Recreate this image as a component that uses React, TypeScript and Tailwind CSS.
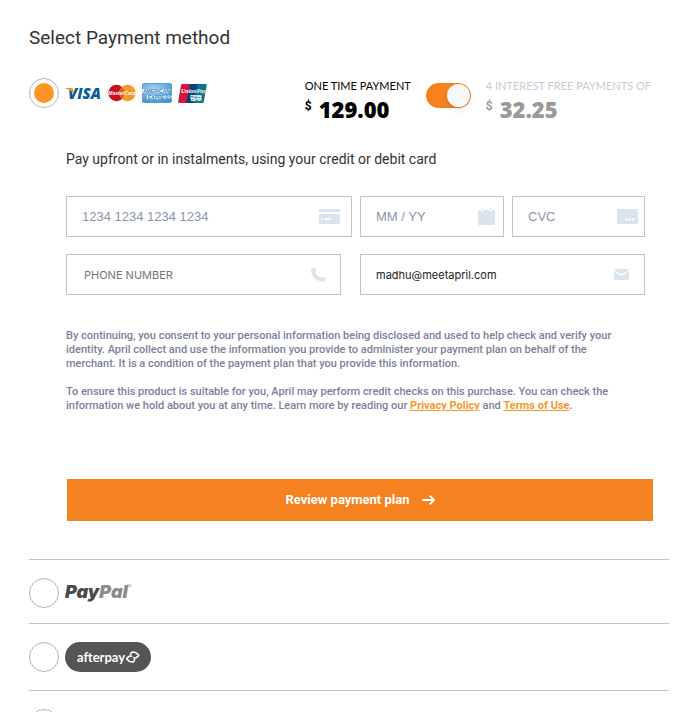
import { useState } from 'react';
import type { ReactNode } from 'react';

function VisaLogo() {
  return (
    <svg width="37" height="18" viewBox="0 0 37 18" className="overflow-visible" role="img" aria-label="Visa">
      <text x="3" y="15" fontSize="15" fontWeight="800" fontStyle="italic" fontFamily="'Open Sans', sans-serif" fill="#0a5b97">
        VISA
      </text>
      <path d="M0 4h6.200c1 0 1.600.4 1.900 1.400L9 10.500C7.200 7.300 4.200 5.300 0 4.300z" fill="#f4982b" />
    </svg>
  );
}

function MasterCardLogo() {
  return (
    <svg width="28" height="18" viewBox="0 0 28 18" className="overflow-visible" role="img" aria-label="MasterCard">
      <circle cx="8.500" cy="9" r="8.200" fill="#c9101c" />
      <circle cx="19.500" cy="9" r="8.200" fill="#f5992b" />
      <path d="M14 3a8.200 8.200 0 0 1 0 12a8.200 8.200 0 0 1 0-12z" fill="#e0611f" />
      <text x="14" y="11" fontSize="5" textAnchor="middle" fontWeight="700" fontStyle="italic" fontFamily="'Liberation Sans', sans-serif" fill="#fff">
        MasterCard
      </text>
    </svg>
  );
}

function AmexLogo() {
  return (
    <svg width="30" height="20" viewBox="0 0 30 20" role="img" aria-label="American Express">
      <defs>
        <radialGradient id="amex" cx="0.4" cy="0.3" r="0.8">
          <stop offset="0" stopColor="#a5d3f0" />
          <stop offset="1" stopColor="#3d8fcd" />
        </radialGradient>
      </defs>
      <rect x="0.500" y="0.500" width="29" height="19" rx="1.500" fill="url(#amex)" stroke="#5a9fd2" />
      <rect x="0" y="6" width="28" height="4" fill="#e9f4fb" />
      <rect x="5" y="12" width="25" height="4" fill="#e9f4fb" />
      <text x="1" y="10" fontSize="5" fontWeight="700" fontFamily="'Liberation Sans', sans-serif" fill="#2f7fc0">
        AMERICAN
      </text>
      <text x="6" y="16" fontSize="5" fontWeight="700" fontFamily="'Liberation Sans', sans-serif" fill="#2f7fc0">
        EXPRESS
      </text>
    </svg>
  );
}

function UnionPayLogo() {
  return (
    <svg width="29" height="19" viewBox="0 0 29 19" role="img" aria-label="UnionPay">
      <path d="M4.500 0H13L9 19H1.500C.4 19 0 18.300.2 17.300L3 1.300C3.200.4 3.700 0 4.500 0z" fill="#d8163a" />
      <path d="M12 0h8.500L17 19H8z" fill="#0d3f78" />
      <path d="M19.500 0h8c1 0 1.400.6 1.200 1.600L25.800 17.500c-.2 1-.8 1.500-1.800 1.500h-9z" fill="#0f6f8c" />
      <text x="3" y="9" fontSize="6" fontWeight="700" fontStyle="italic" fontFamily="'Liberation Serif', serif" fill="#fff">
        UnionPay
      </text>
      <text x="12" y="16" fontSize="6" fontWeight="700" fontFamily="'Noto Sans CJK SC', sans-serif" fill="#fff">
        银联
      </text>
    </svg>
  );
}

function PayPalLogo() {
  return (
    <svg width="70" height="24" viewBox="0 0 70 24" role="img" aria-label="PayPal">
      <text x="0" y="17" fontSize="18" fontWeight="900" fontStyle="italic" fontFamily="Inter, sans-serif">
        <tspan fill="#4a4a4a">Pay</tspan>
        <tspan fill="#8b8b8b">Pal</tspan>
      </text>
      <text x="62" y="6" fontSize="3" fontFamily="'Liberation Sans', sans-serif" fill="#8b8b8b">
        TM
      </text>
    </svg>
  );
}

function AfterpayLogo() {
  return (
    <span className="flex h-[30px] w-[86px] items-center gap-px rounded-full bg-[#555] pl-3 text-white">
      <span className="font-[Lato] text-[13px] leading-4 font-bold">afterpay</span>
      <svg width="14" height="12" viewBox="0 0 14 12" fill="none" stroke="currentColor" strokeWidth="1.600" strokeLinejoin="round" aria-hidden="true">
        <path d="M4.300 4L5.400 1.700Q5.800 1 6.600 1.100L8.800 1.300Q9.300 1.400 9.700 1.700L12.300 3.600Q13 4.200 12.400 4.800L10.300 6.700Q9.900 7 9.300 7L7 6.800" />
        <path d="M8.900 8L7.800 10.300Q7.400 11 6.600 10.900L4.400 10.700Q3.900 10.600 3.500 10.300L1.100 8.400Q.4 7.800 1 7.200L3 5.300Q3.400 5 4 5L6.200 5.200" />
      </svg>
    </span>
  );
}

const CardIcon = () => (
  <svg width="21" height="15" viewBox="0 0 21 15" fill="#dae4ef" aria-hidden="true">
    <path d="M1 0h19q1 0 1 1v2H0V1q0-1 1-1z" />
    <path fillRule="evenodd" d="M0 5h21v9q0 1-1 1H1q-1 0-1-1zM2 9v2h2V9zm4 0v2h6V9z" />
  </svg>
);

const CalendarIcon = () => (
  <svg width="17" height="17" viewBox="0 0 17 17" fill="#dae4ef" aria-hidden="true">
    <path d="M1 2h2v1.500q1 1.500 2 0V2h7v1.500q1 1.500 2 0V2h2q1 0 1 1v13q0 1-1 1H1q-1 0-1-1V3q0-1 1-1z" />
    <rect x="3.500" y="0" width="1" height="3" />
    <rect x="12.500" y="0" width="1" height="3" />
  </svg>
);

const CvcIcon = () => (
  <svg width="21" height="15" viewBox="0 0 21 15" aria-hidden="true">
    <rect width="21" height="15" rx="1" fill="#dae4ef" />
    <path d="M8.500 10.500h2.500m.8 0h2.500m.8 0h2.500" stroke="#fff" strokeWidth="2" />
  </svg>
);

const PhoneIcon = () => (
  <svg width="15" height="15" viewBox="0 0 15 15" fill="#dae4ef" aria-hidden="true">
    <path d="M.3 2.200L2.400.3Q3-.1 3.500.5L5.200 3Q5.500 3.600 5 4.100L4 5.300Q5.800 9 9.400 10.800L10.800 9.800Q11.300 9.400 11.900 9.700L14.500 11.200Q15 11.600 14.800 12.200L13.200 14.400Q12.900 14.800 12.300 14.800Q.3 13.500 0 3Q0 2.500.3 2.200z" />
  </svg>
);

const MailIcon = () => (
  <svg width="15" height="11" viewBox="0 0 15 11" fill="#dae4ef" aria-hidden="true">
    <path d="M.6 0h13.800q.6 0 .6.700L7.500 5.600L0 .7Q0 0 .6 0z" />
    <path d="M0 2.200l7.500 4.900L15 2.200v8q0 .8-.7.800H.7Q0 11 0 10.200z" />
  </svg>
);

interface FieldProps {
  label: string;
  type?: string;
  placeholder?: string;
  defaultValue?: string;
  icon: ReactNode;
  className?: string;
  inputClass: string;
}

function Field({ label, type = 'text', placeholder, defaultValue, icon, className = '', inputClass }: FieldProps) {
  return (
    <label className={`flex h-[41px] min-w-0 items-center border border-[#c4c4c4] ${className}`}>
      <input
        type={type}
        aria-label={label}
        placeholder={placeholder}
        defaultValue={defaultValue}
        className={`h-full min-w-0 flex-1 bg-transparent outline-none ${inputClass}`}
      />
      {icon}
    </label>
  );
}

interface MethodRadioProps {
  value: string;
  label: string;
  selected: string;
  onSelect: (value: string) => void;
}

function MethodRadio({ value, label, selected, onSelect }: MethodRadioProps) {
  return (
    <input
      type="radio"
      name="method"
      value={value}
      aria-label={label}
      checked={selected === value}
      onChange={() => onSelect(value)}
      className="size-[30px] shrink-0 appearance-none rounded-full border border-[#b5b5b5] bg-white bg-clip-content p-1 checked:bg-[#fb9526]"
    />
  );
}

interface PlanPriceProps {
  title: string;
  amount: string;
  titleClass: string;
  amountClass: string;
}

function PlanPrice({ title, amount, titleClass, amountClass }: PlanPriceProps) {
  return (
    <div>
      <p className={`font-[Lato,sans-serif] text-[11px] leading-4 ${titleClass}`}>{title}</p>
      <p className={`flex items-start gap-[7px] ${amountClass}`}>
        <span className="pt-1 text-xs leading-4 font-bold">$</span>
        <span className="font-['Open_Sans',sans-serif] text-[22px] leading-[30px] font-extrabold">{amount}</span>
      </p>
    </div>
  );
}

const stripeInput = "font-['Liberation_Sans',sans-serif] text-[13px] text-[#8c93ad] placeholder:text-[#8c93ad]";

export default function App() {
  const [method, setMethod] = useState('card');
  const [oneTime, setOneTime] = useState(true);

  return (
    <main className="bg-white pt-6 pr-[19px] pl-[29px] font-[Roboto,sans-serif]">
      <h1 className="text-[19px] leading-7 text-[#333]">Select Payment method</h1>

      <section className="pb-[38px]">
        <div className="flex items-start justify-between pt-[26px] pr-[18px]">
          <div className="flex items-center">
            <MethodRadio value="card" label="Credit or debit card" selected={method} onSelect={setMethod} />
            <div className="flex items-center gap-1.5 pl-1.5">
              <VisaLogo />
              <MasterCardLogo />
              <AmexLogo />
              <UnionPayLogo />
            </div>
          </div>

          <div className="flex items-start">
            <PlanPrice title="ONE TIME PAYMENT" amount="129.00" titleClass="text-black" amountClass="text-black" />
            <input
              type="checkbox"
              role="switch"
              aria-label="Pay one time"
              checked={oneTime}
              onChange={() => setOneTime(!oneTime)}
              className="mx-[15px] mt-[5px] flex h-[25px] w-[45px] appearance-none items-center rounded-full bg-[#bbb] px-px before:size-[23px] before:rounded-full before:bg-[#f8f8f9] before:shadow-md checked:justify-end checked:bg-[#f6821f]"
            />
            <PlanPrice title="4 INTEREST FREE PAYMENTS OF" amount="32.25" titleClass="text-[#cacad6]" amountClass="text-[#999]" />
          </div>
        </div>

        <form className="pl-[37px]" onSubmit={(e) => e.preventDefault()}>
          <p className="pt-[25px] text-sm leading-5 text-[#333]">
            Pay upfront or in instalments, using your credit or debit card
          </p>

          <div className="mr-6 grid grid-cols-[286fr_144fr_133fr] gap-2 pt-[27px]">
            <Field label="Card number" placeholder="1234 1234 1234 1234" icon={<CardIcon />} className="pr-[11px] pl-[15px]" inputClass={stripeInput} />
            <Field label="Expiry date" placeholder="MM / YY" icon={<CalendarIcon />} className="pr-2 pl-[15px]" inputClass={stripeInput} />
            <Field label="Security code" placeholder="CVC" icon={<CvcIcon />} className="pr-1.5 pl-[15px]" inputClass={stripeInput} />
          </div>
          <div className="mr-6 grid grid-cols-[275fr_285fr] gap-[19px] pt-[17px]">
            <Field
              label="Phone number"
              type="tel"
              placeholder="PHONE NUMBER"
              icon={<PhoneIcon />}
              className="pr-3.5 pl-[17px]"
              inputClass="font-[Inter,sans-serif] text-[11px] placeholder:text-[#757575]"
            />
            <Field
              label="Email"
              type="email"
              defaultValue="madhu@meetapril.com"
              icon={<MailIcon />}
              className="pr-[15px] pl-[15px]"
              inputClass="font-[Inter,sans-serif] text-[11px] text-[#222]"
            />
          </div>

          <div className="mr-6 flex flex-col gap-3.5 pt-[34px] pr-2 text-[11px] leading-[14px] font-medium text-[#7c7f9c]">
            <p>
              By continuing, you consent to your personal information being disclosed and used to help check and verify your
              identity. April collect and use the information you provide to administer your payment plan on behalf of the
              merchant. It is a condition of the payment plan that you provide this information.
            </p>
            <p>
              To ensure this product is suitable for you, April may perform credit checks on this purchase. You can check the
              information we hold about you at any time. Learn more by reading our{' '}
              <a href="#privacy" className="font-bold text-[#fb9526] underline">Privacy Policy</a> and{' '}
              <a href="#terms" className="font-bold text-[#fb9526] underline">Terms of Use</a>.
            </p>
          </div>

          <div className="pt-[66px] pr-4 pl-px">
            <button type="submit" className="flex h-[42px] w-full items-center justify-center gap-3 bg-[#f6821f] text-[13px] font-bold text-white">
              Review payment plan
              <svg width="13" height="10" viewBox="0 0 13 10" fill="none" stroke="currentColor" strokeWidth="1.800" strokeLinecap="round" strokeLinejoin="round" aria-hidden="true">
                <path d="M1 5h11M8.300 1.200L12 5L8.300 8.800" />
              </svg>
            </button>
          </div>
        </form>
      </section>

      <section className="flex items-center gap-1.5 border-t border-[#c4c4c4] pt-[18px] pb-[15px]">
        <MethodRadio value="paypal" label="PayPal" selected={method} onSelect={setMethod} />
        <PayPalLogo />
      </section>

      <section className="flex items-center gap-1.5 border-t border-[#c4c4c4] py-[18px]">
        <MethodRadio value="afterpay" label="Afterpay" selected={method} onSelect={setMethod} />
        <AfterpayLogo />
      </section>

      <section className="flex items-center border-t border-[#c4c4c4] py-[18px]">
        <MethodRadio value="other" label="Other payment method" selected={method} onSelect={setMethod} />
      </section>
    </main>
  );
}
